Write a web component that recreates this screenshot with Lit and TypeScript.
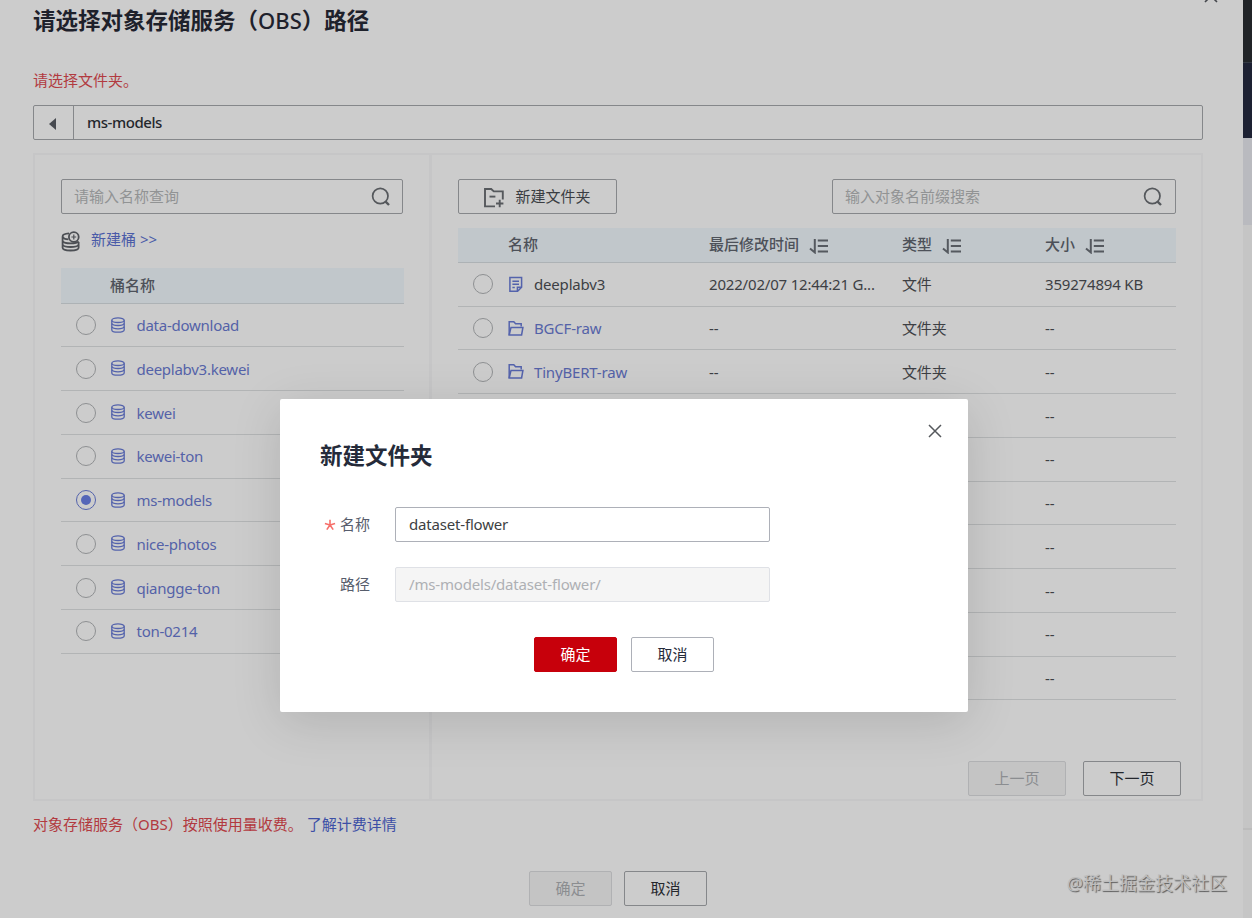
import { LitElement, html, css, svg, nothing } from "lit";
import { customElement, property, state } from "lit/decorators.js";
import { classMap } from "lit/directives/class-map.js";

const glyphs: Record<string, { w: number; h: number; body: unknown }> = {
  search: {
    w: 20, h: 20,
    body: svg`<circle cx="9.3" cy="9" r="7.7"/><path d="M14.6 14.6 L18 18" stroke-width="2.4"/>`,
  },
  close: { w: 14, h: 14, body: svg`<path d="M1 1 L13 13 M13 1 L1 13"/>` },
  bucketAdd: {
    w: 20, h: 21,
    body: svg`<path d="M8 2.4 C4 2.6 1.6 3.6 1.6 5.4 V16.8 C1.6 18.6 5 19.5 9.6 19.5 S17.6 18.6 17.6 16.8 V11"/><path d="M1.6 5.8 C2.4 7.4 4.4 8.2 7.4 8.4"/><path d="M1.6 10.4 C3 12 6 12.4 9.6 12.4 S16.4 12 17.6 10.4"/><path d="M1.6 14 C3 15.6 6 16 9.6 16 S16.4 15.6 17.6 14"/><circle cx="12.8" cy="6" r="4.9"/><path d="M12.8 3.6 V8.4 M10.4 6 H15.2" stroke-width="1.2"/>`,
  },
  bucket: {
    w: 16, h: 17,
    body: svg`<ellipse cx="8" cy="3.2" rx="6.2" ry="2.3"/><path d="M1.8 3.2 V13 C1.8 14.3 4.4 15.2 8 15.2 S14.2 14.3 14.2 13 V3.2"/><path d="M1.8 6.4 C2.4 7.8 5 8.5 8 8.5 S13.6 7.8 14.2 6.4"/><path d="M1.8 9.7 C2.4 11.1 5 11.8 8 11.8 S13.6 11.1 14.2 9.7"/>`,
  },
  folderAdd: {
    w: 22, h: 22,
    body: svg`<path d="M12 19.4 H2 V2 H8.2 L10.8 4.4 H19.8 V12.5"/><path d="M6.5 9.6 H12.4"/><path d="M16.7 12.8 V20.2 M13 16.5 H20.4"/>`,
  },
  file: {
    w: 16, h: 17,
    body: svg`<path d="M1.9 1.6 H13.6 V11.2 L9.6 15.2 H1.9 Z"/><path d="M9.4 15 V11.2 H13.4"/><path d="M4.4 5.2 H11 M4.4 8.2 H11 M4.4 11.4 H6.8"/>`,
  },
  folder: {
    w: 16, h: 17,
    body: svg`<path d="M1.2 15 V1.8 H5.8 L7.6 3.8 H13.2 V6.4"/><path d="M1.2 15 L3 7.4 H14.9 L13.6 15 Z"/>`,
  },
  sort: {
    w: 20, h: 16,
    body: svg`<path d="M5.8 1 V14.4 L1 10.4"/><path d="M8.8 2.5 H19 M8.8 8 H19 M8.8 13.4 H19"/>`,
  },
  back: { w: 9, h: 14, body: svg`<path d="M8 1 V13 L1 7 Z" fill="currentColor" stroke="none"/>` },
  star: {
    w: 12, h: 12,
    body: svg`<path d="M6 .8 V6 M6 6 L.9 4.5 M6 6 L11.1 4.5 M6 6 L2.8 10.6 M6 6 L9.2 10.6"/>`,
  },
};

@customElement("line-icon")
class LineIcon extends LitElement {
  @property() name = "search";
  @property({ type: Number }) stroke = 1.6;
  static styles = css`
    :host { display: inline-flex; flex: none; }
    svg { display: block; fill: none; stroke: currentColor; }
  `;
  render() {
    const g = glyphs[this.name];
    return html`<svg width=${g.w} height=${g.h} viewBox="0 0 ${g.w} ${g.h}" stroke-width=${this.stroke}>${g.body}</svg>`;
  }
}

interface Entry { name: string; kind: "file" | "folder"; time: string; type: string; size: string; }

const folder = (name: string): Entry => ({ name, kind: "folder", time: "--", type: "文件夹", size: "--" });

@customElement("app-root")
class AppRoot extends LitElement {
  @state() buckets = ["data-download", "deeplabv3.kewei", "kewei", "kewei-ton", "ms-models", "nice-photos", "qiangge-ton", "ton-0214"];
  @state() current = "ms-models";
  @state() entries: Entry[] = [
    { name: "deeplabv3", kind: "file", time: "2022/02/07 12:44:21 G...", type: "文件", size: "359274894 KB" },
    folder("BGCF-raw"),
    folder("TinyBERT-raw"),
    ...Array.from({ length: 7 }, () => folder("")),
  ];

  static styles = css`
    :host {
      display: block; position: relative; width: 1252px; height: 918px; overflow: hidden;
      background: #ccc; color: #3d3f44;
      font: 15px/20px "Noto Sans", "Noto Sans CJK SC", sans-serif;
    }
    * { box-sizing: border-box; }
    .screen { display: grid; grid-template-columns: 1243px 9px; height: 918px; }
    .page { padding: 5px 40px 0 33px; display: flex; flex-direction: column; }
    h1, h2 { margin: 0; font-size: 22.5px; line-height: 30px; height: 30px; font-weight: 700; color: #1e212b; }
    .obs { font-weight: 500; font-size: 22px; }
    .warn { margin-top: 35px; color: #b23a40; }
    .path { margin-top: 15px; height: 35px; border: 1px solid #85878a; border-radius: 2px; display: flex; line-height: 33px; font-weight: 500; color: #24272d; flex: none; }
    .back { width: 40px; border-right: 1px solid #85878a; display: flex; align-items: center; justify-content: center; color: #46494f; padding: 3px 2px 0 0; }
    .crumb { padding-left: 13px; letter-spacing: -.45px; }
    .panel { margin-top: 13px; height: 648px; flex: none; display: grid; grid-template-columns: 397px 1fr; border: 2px solid #c6c6c7; }
    .left { border-right: 3px solid #c6c6c7; padding: 24px 24px 0 26px; }
    .right { padding: 24px 25px 0 26px; display: flex; flex-direction: column; }
    .box { height: 35px; border: 1px solid #85878a; border-radius: 2px; display: flex; align-items: center; justify-content: space-between; padding: 0 12px 1px; color: #919394; }
    .box line-icon { color: #55585c; margin: 1px -1px 0 0; }
    .left .box { width: 342px; }
    .create { display: flex; align-items: center; gap: 10px; height: 20px; margin-top: 15px; color: #4a5ba8; }
    .create line-icon { color: #4c4f54; margin-top: 4px; }
    .tools { display: flex; justify-content: space-between; }
    .tools .box { width: 344px; }
    .tools .box line-icon { margin-right: 0; }
    .btn { display: flex; align-items: center; justify-content: center; height: 35px; border: 1px solid #85878a; border-radius: 2px; color: #24272d; width: 83px; padding-bottom: 2px; }
    .btn.off { background: #c4c4c4; border-color: #b0b1b3; color: #8b8d90; }
    .btn.new { width: 159px; gap: 10px; color: #3a3d42; padding-right: 1px; }
    .btn.new line-icon { color: #55585c; margin-top: 5px; }
    .btn.turn { width: 98px; padding-bottom: 1px; }
    .head { background: #c1c7cb; border-bottom: 1px solid #adb2b5; height: 35px; display: grid; align-items: center; font-weight: 500; color: #4d5159; flex: none; padding-bottom: 2px; }
    .left .head { margin-top: 19px; height: 36px; width: 343px; }
    .left .head span { padding-left: 49px; }
    .row { height: 43.75px; display: grid; align-items: center; border-bottom: 1px solid #b2b4b5; flex: none; letter-spacing: -.18px; }
    .left .head + .row { margin-top: -.3px; }
    .left .row { width: 343px; grid-template-columns: 49px 26.5px 1fr; }
    .left .link { letter-spacing: -.26px; }
    .files { grid-template-columns: 50px 201px 193px 143px 1fr; }
    .tools + .head { margin-top: 14px; width: 718px; height: 34.9px; }
    .right .row { width: 718px; }
    .cell { display: flex; align-items: center; }
    .head .cell { gap: 10px; }
    .head line-icon { margin-top: 4px; color: #55595f; }
    .name { gap: 10px; }
    .link { color: #5462a8; }
    .blue { color: #5463ac; }
    .radio { width: 20px; height: 20px; border: 1px solid #8e9092; border-radius: 50%; margin-left: 15px; display: flex; align-items: center; justify-content: center; }
    .radio.on { border-color: #5463ac; }
    .radio.on::after { content: ""; width: 10px; height: 10px; border-radius: 50%; background: #5566b8; }
    .pager { margin-top: 60.5px; margin-right: -5px; display: flex; justify-content: flex-end; gap: 17px; }
    .fee { margin-top: 13px; color: #b23a40; display: flex; gap: 4px; }
    .fee .more { color: #3c4fa6; }
    .actions { margin: 37px 0 0 496px; display: flex; gap: 12px; }
    .edge { display: grid; grid-template-rows: 62px 76px 87px 605px 1fr; }
    .e1 { background: #212428; } .e2 { background: #1d2133; border-top: 1px solid #343a44; }
    .e3 { background: #b9babf; } .e4 { background: #c5c5c5; border-bottom: 2px solid #bcbcbc; } .e5 { background: #c6c6c6; }
    .topclose { position: absolute; left: 1204px; top: -11px; color: #44474c; }
    .mark { position: absolute; right: 25px; top: 870px; font-size: 18px; line-height: 26px; color: #bdbdbd; text-shadow: 1px 1px 1px #5c5c5c; }
    .dialog { position: absolute; left: 280px; top: 399px; width: 688px; height: 313px; background: #fff; border-radius: 2px; box-shadow: 0 10px 50px rgba(0, 0, 0, .13); padding: 42px 40px 0; }
    .dialog h2 { color: #252b3a; }
    .dialog .x { position: absolute; right: 26px; top: 25px; color: #55585c; }
    .field { display: grid; grid-template-columns: 51px 375px; column-gap: 24px; height: 35px; align-items: center; margin-top: 25px; color: #575d6c; }
    .field:first-of-type { margin-top: 36px; }
    .label { display: flex; justify-content: flex-end; align-items: center; gap: 4px; padding: 0 1px 2px 0; }
    .star { color: #f66f6a; margin-top: 2px; }
    .input { height: 35px; line-height: 33px; border: 1px solid #adb0b8; border-radius: 2px; padding-left: 13px; color: #3d3f43; letter-spacing: -.18px; }
    .input.off { background: #f5f5f5; border-color: #dfe1e6; color: #aeb0b4; }
    .ok { background: #c7000b; border-color: #c7000b; color: #fff; }
    .dialog .foot { display: flex; gap: 14px; margin: 35px 0 0 214px; }
    .dialog .cancel { border-color: #adb0b8; color: #252b3a; }
  `;

  private radio(on: boolean) {
    return html`<span class=${classMap({ radio: true, on })}></span>`;
  }

  private sortable(text: string) {
    return html`<span class="cell">${text}<line-icon name="sort" .stroke=${2}></line-icon></span>`;
  }

  render() {
    return html`
      <div class="screen">
        <main class="page">
          <h1>请选择对象存储服务（<span class="obs">OBS</span>）路径</h1>
          <div class="warn">请选择文件夹。</div>
          <div class="path"><span class="back"><line-icon name="back"></line-icon></span><span class="crumb">${this.current}</span></div>
          <section class="panel">
            <div class="left">
              <div class="box">请输入名称查询<line-icon name="search" .stroke=${1.7}></line-icon></div>
              <div class="create"><line-icon name="bucketAdd" .stroke=${1.8}></line-icon><span>新建桶 &gt;&gt;</span></div>
              <div class="head"><span>桶名称</span></div>
              ${this.buckets.map((b) => html`
                <div class="row" @click=${() => (this.current = b)}>
                  ${this.radio(b === this.current)}
                  <line-icon class="blue" name="bucket" .stroke=${1.3}></line-icon>
                  <span class="link">${b}</span>
                </div>`)}
            </div>
            <div class="right">
              <div class="tools">
                <div class="btn new"><line-icon name="folderAdd" .stroke=${1.9}></line-icon>新建文件夹</div>
                <div class="box">输入对象名前缀搜索<line-icon name="search" .stroke=${1.7}></line-icon></div>
              </div>
              <div class="head files"><span></span><span>名称</span>${this.sortable("最后修改时间")}${this.sortable("类型")}${this.sortable("大小")}</div>
              ${this.entries.map((e) => html`
                <div class="row files">
                  ${this.radio(false)}
                  <span class="cell name"><line-icon class="blue" name=${e.kind} .stroke=${1.5}></line-icon>${e.name ? html`<span class=${e.kind === "folder" ? "link" : ""}>${e.name}</span>` : nothing}</span>
                  <span>${e.time}</span><span>${e.type}</span><span>${e.size}</span>
                </div>`)}
              <div class="pager"><div class="btn turn off">上一页</div><div class="btn turn">下一页</div></div>
            </div>
          </section>
          <div class="fee"><span>对象存储服务（OBS）按照使用量收费。</span><span class="more">了解计费详情</span></div>
          <div class="actions"><div class="btn off">确定</div><div class="btn">取消</div></div>
        </main>
        <aside class="edge"><i class="e1"></i><i class="e2"></i><i class="e3"></i><i class="e4"></i><i class="e5"></i></aside>
      </div>
      <line-icon class="topclose" name="close"></line-icon>
      <div class="dialog">
        <h2>新建文件夹</h2>
        <line-icon class="x" name="close" .stroke=${1.5}></line-icon>
        <div class="field"><span class="label"><line-icon class="star" name="star" .stroke=${1.6}></line-icon>名称</span><div class="input">dataset-flower</div></div>
        <div class="field"><span class="label">路径</span><div class="input off">/ms-models/dataset-flower/</div></div>
        <div class="foot"><div class="btn ok">确定</div><div class="btn cancel">取消</div></div>
      </div>
      <div class="mark">@稀土掘金技术社区</div>
    `;
  }
}
